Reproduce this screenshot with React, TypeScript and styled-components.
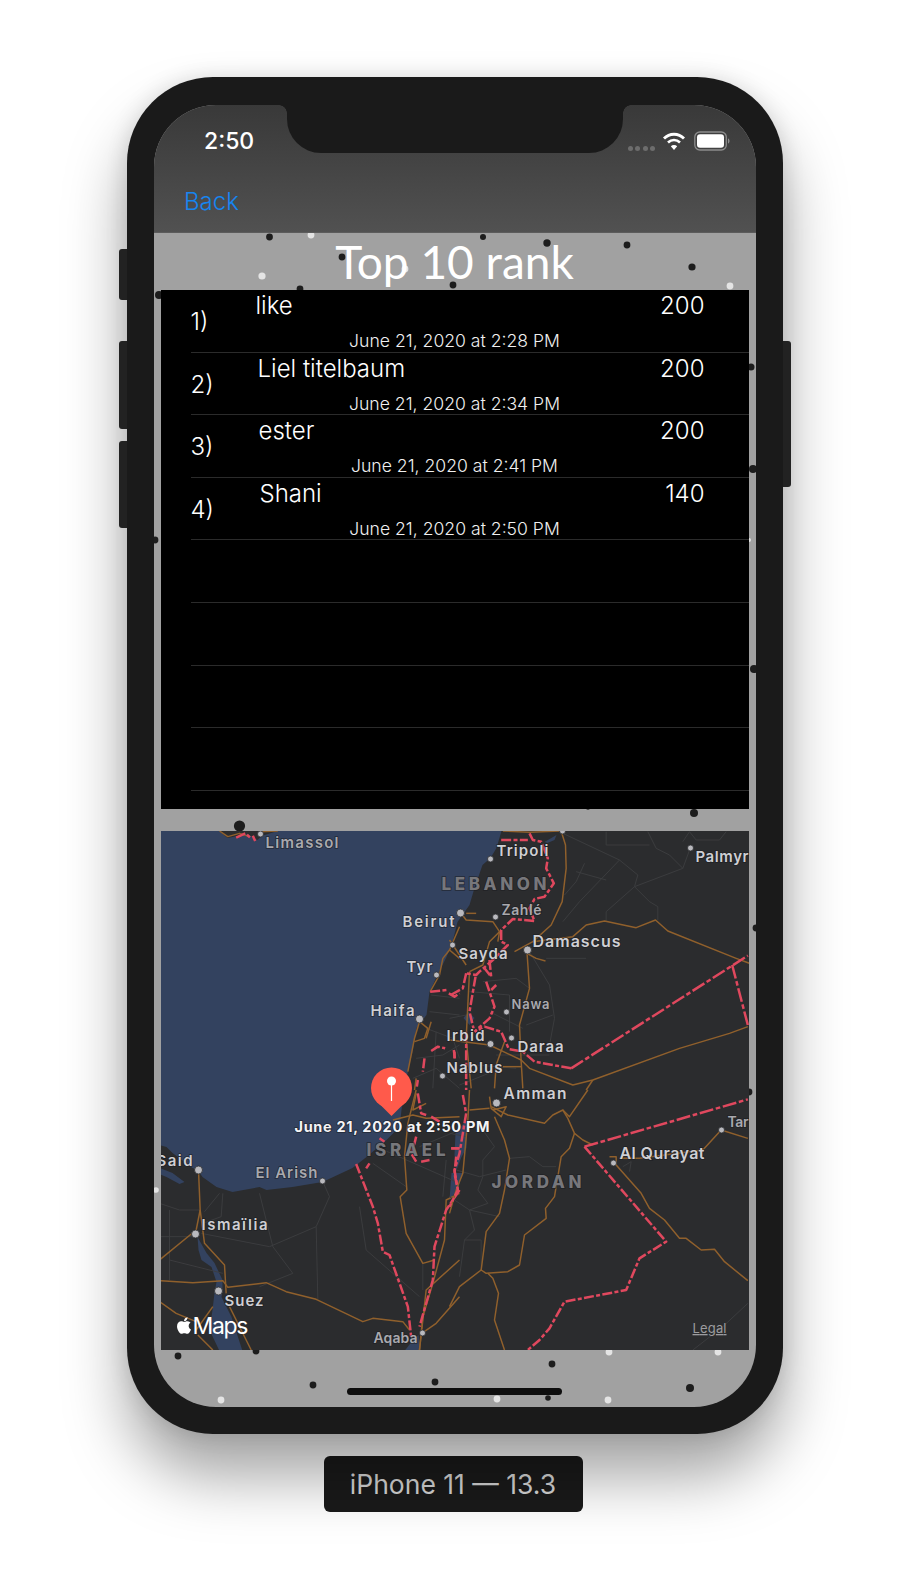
import React from "react";
import styled, { createGlobalStyle } from "styled-components";
import { FaApple } from "react-icons/fa";

const Global = createGlobalStyle`
  html, body { margin: 0; padding: 0; background: #fff; }
  #root { width: 910px; height: 1584px; overflow: hidden; }
`;

const UI = `"Inter", "Liberation Sans", sans-serif`;

const Stage = styled.div`
  width: 910px;
  height: 1584px;
  padding-top: 77px;
  box-sizing: border-box;
  display: flex;
  flex-direction: column;
  align-items: center;
  background: #fff;
  font-family: ${UI};
`;

const Phone = styled.div`
  position: relative;
  width: 656px;
  height: 1357px;
  box-sizing: border-box;
  padding: 28px 26px 27px 27px;
  border-radius: 86px;
  background: #1a1a1a;
  box-shadow: 0 42px 62px rgba(0, 0, 0, 0.36), 0 0 22px rgba(0, 0, 0, 0.12);
`;

const SideButton = styled.div<{ $side: "left" | "right"; $top: number; $height: number }>`
  position: absolute;
  ${(p) => (p.$side === "left" ? "left: -8px; border-radius: 3px 0 0 3px;" : "right: -8px; border-radius: 0 3px 3px 0;")}
  top: ${(p) => p.$top}px;
  width: 8px;
  height: ${(p) => p.$height}px;
  background: #222;
`;

const Screen = styled.div`
  position: relative;
  width: 602px;
  height: 1302px;
  border-radius: 62px;
  overflow: hidden;
  display: flex;
  flex-direction: column;
  background: #a1a1a1;
`;

const Notch = styled.div`
  position: absolute;
  top: 0;
  left: 133px;
  width: 336px;
  height: 48px;
  background: #1a1a1a;
  border-radius: 0 0 34px 34px;
  z-index: 3;
  &::before,
  &::after {
    content: "";
    position: absolute;
    top: 0;
    width: 8px;
    height: 8px;
  }
  &::before {
    left: -8px;
    background: radial-gradient(circle at 0 100%, transparent 7.5px, #1a1a1a 8px);
  }
  &::after {
    right: -8px;
    background: radial-gradient(circle at 100% 100%, transparent 7.5px, #1a1a1a 8px);
  }
`;

const Header = styled.header`
  position: relative;
  height: 128px;
  flex: none;
  box-sizing: border-box;
  background: linear-gradient(#393939, #515151);
  border-bottom: 1px solid #5c5c5c;
  display: flex;
  flex-direction: column;
`;

const StatusBar = styled.div`
  height: 82px;
  padding: 22px 25px 0 50px;
  box-sizing: border-box;
  display: flex;
  justify-content: space-between;
  align-items: flex-start;
`;

const Clock = styled.span`
  font-size: 23px;
  line-height: 29px;
  font-weight: 500;
  color: #fff;
`;

const StatusIcons = styled.div`
  display: flex;
  align-items: center;
  gap: 8px;
  margin-top: 4px;
`;

const Signal = styled.div`
  display: flex;
  gap: 2.5px;
  margin: 14px -1px 0 0;
`;

const SignalDot = styled.i`
  width: 5px;
  height: 5px;
  border-radius: 50%;
  background: #6d6d6d;
`;

const NavBar = styled.nav`
  padding-left: 30px;
`;

const BackLink = styled.a`
  font-size: 24px;
  line-height: 30px;
  font-weight: 300;
  color: #1685f0;
`;

const Backdrop = styled.svg`
  position: absolute;
  left: 0;
  top: 128px;
  width: 603px;
  height: 1174px;
`;

const Star = styled.circle<{ $white?: boolean }>`
  fill: ${(p) => (p.$white ? "#e4e4e4" : "#1d1d1d")};
`;

const Content = styled.main`
  position: relative;
  flex: 1;
  display: flex;
  flex-direction: column;
  padding: 0 7.5px 0 6.5px;
`;

const Title = styled.h1`
  height: 57px;
  margin: 0;
  text-align: center;
  font-family: "Lato", sans-serif;
  font-size: 46px;
  line-height: 58px;
  font-weight: 400;
  color: #fff;
`;

const Table = styled.section`
  height: 519px;
  overflow: hidden;
  background: #000;
  color: #fff;
`;

const Row = styled.div`
  position: relative;
  height: 62.6px;
  box-sizing: border-box;
  display: grid;
  grid-template-columns: 94px 1fr auto;
  grid-template-rows: 30px 32.6px;
  &::after {
    content: "";
    position: absolute;
    left: 30px;
    right: 0;
    bottom: 0;
    height: 1px;
    background: #2b2b2b;
  }
`;

const Rank = styled.span`
  grid-column: 1;
  grid-row: 1 / 3;
  align-self: center;
  padding: 2px 0 0 30px;
  font-size: 24px;
  line-height: 28px;
  font-weight: 300;
`;

const Name = styled.span<{ $indent: number }>`
  grid-column: 2;
  grid-row: 1;
  padding-left: ${(p) => p.$indent}px;
  font-size: 24px;
  line-height: 31px;
  font-weight: 300;
`;

const Score = styled.span`
  grid-column: 3;
  grid-row: 1;
  padding-right: 44px;
  font-size: 24px;
  line-height: 31px;
  font-weight: 300;
`;

const DateLine = styled.span`
  grid-column: 1 / -1;
  grid-row: 2;
  text-align: center;
  align-self: end;
  margin-bottom: -0.5px;
  font-size: 17.6px;
  line-height: 25px;
  font-weight: 300;
  color: #f0f0f0;
`;

const MapPanel = styled.svg`
  display: block;
  margin-top: 21.5px;
  width: 588px;
  height: 519.5px;
`;

const Sea = styled.rect`
  fill: #33425f;
`;
const Land = styled.path`
  fill: #2b2c2e;
`;
const Water = styled.path`
  fill: #33425f;
`;
const Minor = styled.path`
  fill: none;
  stroke: #3c3d40;
  stroke-width: 2.8;
`;
const Road = styled.path`
  fill: none;
  stroke: #90602c;
  stroke-width: 4.4;
  stroke-linejoin: round;
`;
const Border = styled.path<{ $long?: boolean }>`
  fill: none;
  stroke: #e0485e;
  stroke-width: 7.5;
  stroke-linejoin: round;
  stroke-dasharray: ${(p) => (p.$long ? "42 8 14 8" : "30 7 12 7")};
`;
const City = styled.circle`
  fill: #b9b9be;
  stroke: #2b2c2e;
  stroke-width: 0.8;
`;

type LabelKind = "city" | "dim" | "country" | "stamp";
const Label = styled.text<{ $kind: LabelKind; $size: number }>`
  font-family: ${UI};
  font-size: ${(p) => p.$size}px;
  font-weight: ${(p) => (p.$kind === "stamp" ? 700 : p.$kind === "country" ? 800 : 600)};
  fill: ${(p) =>
    p.$kind === "stamp" ? "#f4f4f6" : p.$kind === "country" ? "#77777b" : p.$kind === "dim" ? "#a9a9ae" : "#cfcfd3"};
  stroke: rgba(25, 26, 30, 0.65);
  stroke-width: 1.6px;
  paint-order: stroke;
`;
const MapsWord = styled.text`
  font-family: ${UI};
  font-size: 23px;
  font-weight: 400;
  fill: #fff;
`;
const Legal = styled.text`
  font-family: ${UI};
  font-size: 13px;
  font-weight: 400;
  fill: #9c9c9f;
  text-decoration: underline;
`;
const PinHead = styled.circle`
  fill: #ff5a4b;
`;
const PinTail = styled.path`
  fill: #ff5a4b;
`;
const PinDot = styled.circle`
  fill: #fff;
`;
const PinStick = styled.line`
  stroke: #fff;
  stroke-width: 1.2;
`;

const HomeBar = styled.div`
  position: absolute;
  left: 193px;
  bottom: 12px;
  width: 215px;
  height: 7px;
  border-radius: 4px;
  background: #0e0e0e;
`;

const Caption = styled.div`
  margin: 22px 4px 0 0;
  width: 259px;
  height: 56px;
  box-sizing: border-box;
  border-radius: 6px;
  background: #1a1a1a;
  color: #d8d8d8;
  display: flex;
  align-items: center;
  justify-content: center;
  font-size: 26.5px;
  font-weight: 400;
`;

const scores = [
  { rank: "1)", name: "like", indent: 1, score: 200, date: "June 21, 2020 at 2:28 PM" },
  { rank: "2)", name: "Liel titelbaum", indent: 3, score: 200, date: "June 21, 2020 at 2:34 PM" },
  { rank: "3)", name: "ester", indent: 4, score: 200, date: "June 21, 2020 at 2:41 PM" },
  { rank: "4)", name: "Shani", indent: 5, score: 140, date: "June 21, 2020 at 2:50 PM" },
];

const blackStars: [number, number, number][] = [
  [269.5, 237, 3.4], [483, 237, 3], [547, 243, 3.7], [627, 245, 3.4], [692, 267, 3.6], [342, 257, 3.4],
  [453, 285, 3.4], [300, 289, 3.4], [159, 295, 4], [155, 540, 3.4], [751, 367, 3.5], [753, 469, 4],
  [754, 669, 4], [239.5, 826, 5.6], [694, 813, 4], [588, 807.5, 2.2], [178, 1356, 3.4], [256, 1351, 3.4],
  [552, 1364, 3.4], [313, 1385, 3.4], [435, 1382, 3.4], [548, 1398, 2.8], [690, 1388, 4], [756, 928, 3.4], [749, 1092, 3.4],
];
const whiteStars: [number, number, number][] = [
  [311, 235, 3.4], [262, 276, 3.6], [405, 269, 3.4], [730, 286, 3.4], [749, 540, 2], [609, 1352, 3.4], [718, 1352, 3.4],
  [221, 1400, 3.4], [497, 1399, 3.4], [608, 1400, 3.4], [156, 1190, 2.8],
];

const cities: [number, number, number][] = [
  [261, 834, 3], [491, 859, 3], [691, 848, 3], [461, 913, 4], [496, 917, 3], [528, 950, 4], [453, 945, 3],
  [437, 975, 3], [420, 1019, 4], [507, 1012, 3], [491, 1044, 3.5], [512, 1038, 3], [443, 1076, 3], [497, 1103, 4],
  [323, 1181, 3], [199, 1170, 4], [196, 1234, 4], [219, 1291, 4], [423, 1333, 3], [614, 1163, 3], [722, 1130, 3],
  [563, 831, 3],
];

const labels: { t: string; x: number; y: number; w: number; s: number; k: LabelKind }[] = [
  { t: "Limassol", x: 266, y: 848, w: 73, s: 15, k: "dim" },
  { t: "Tripoli", x: 497, y: 856, w: 52, s: 15, k: "city" },
  { t: "Palmyr", x: 696, y: 862, w: 53, s: 15, k: "city" },
  { t: "LEBANON", x: 442, y: 890, w: 105, s: 17, k: "country" },
  { t: "Beirut", x: 403, y: 927, w: 52, s: 15, k: "city" },
  { t: "Zahlé", x: 502, y: 915, w: 40, s: 14, k: "dim" },
  { t: "Damascus", x: 533, y: 947, w: 88, s: 16, k: "city" },
  { t: "Sayda", x: 459, y: 959, w: 49, s: 15, k: "city" },
  { t: "Tyr", x: 407, y: 972, w: 26, s: 15, k: "city" },
  { t: "Haifa", x: 371, y: 1016, w: 44, s: 15, k: "city" },
  { t: "Nawa", x: 512, y: 1009, w: 38, s: 13, k: "dim" },
  { t: "Irbid", x: 447, y: 1041, w: 38, s: 15, k: "city" },
  { t: "Daraa", x: 518, y: 1052, w: 46, s: 15, k: "city" },
  { t: "Nablus", x: 447, y: 1073, w: 56, s: 15, k: "city" },
  { t: "Amman", x: 504, y: 1099, w: 63, s: 15.5, k: "city" },
  { t: "June 21, 2020 at 2:50 PM", x: 295, y: 1132, w: 195, s: 14.5, k: "stamp" },
  { t: "ISRAEL", x: 367, y: 1156, w: 79, s: 17, k: "country" },
  { t: "Said", x: 157, y: 1166, w: 36, s: 15, k: "city" },
  { t: "El Arish", x: 256, y: 1178, w: 62, s: 15, k: "dim" },
  { t: "Ismaïlia", x: 202, y: 1230, w: 66, s: 15, k: "city" },
  { t: "Suez", x: 225, y: 1306, w: 39, s: 15, k: "city" },
  { t: "Aqaba", x: 374, y: 1343, w: 44, s: 14, k: "dim" },
  { t: "JORDAN", x: 492, y: 1188, w: 90, s: 17, k: "country" },
  { t: "Al Qurayat", x: 620, y: 1159, w: 85, s: 16, k: "city" },
  { t: "Tar", x: 728, y: 1127, w: 21, s: 14, k: "dim" },
];

type Quadrant = { x: number; y: number; minor: string[]; road: string[]; border: string[]; long?: string[] };

// each quadrant's paths are drawn on a 3x grid, then scaled down into the map
const quadrants: Quadrant[] = [
  {
    x: 160,
    y: 825,
    minor: [
      "M815,510 L900,520", "M810,560 L900,570", "M800,610 L880,640 L900,700", "M770,700 L850,690 L900,660",
      "M760,760 L830,730 L900,790", "M830,620 L820,790",
    ],
    road: [
      "M180,18 L205,35 L240,25 L270,35", "M300,20 L355,18", "M900,305 L870,375 L850,400 L840,450 L812,500",
      "M870,375 L900,400", "M780,590 L765,640 L745,740", "M780,590 L805,610 L795,640 L765,650", "M815,590 L800,640",
      "M770,760 L765,795",
    ],
    border: [
      "M812,500 L862,495", "M868,505 L885,515 L900,505", "M815,678 L835,665 L857,670", "M883,675 L886,700",
      "M795,700 L790,740", "M775,765 L772,785", "M230,38 L258,25 L272,38", "M280,32 L287,48",
    ],
  },
  {
    x: 450,
    y: 825,
    minor: [
      "M340,25 L510,105 L565,150 L555,185 L470,260 L470,288", "M555,185 L600,230 L625,245 L625,285",
      "M555,185 L700,130 L722,70", "M510,105 L390,230 L340,290", "M380,140 L470,165", "M405,115 L380,170 L345,210",
      "M595,20 L620,70 L660,90 L700,130", "M700,50 L720,20 L740,45 L810,45 L830,20", "M470,20 L470,60 L600,60",
      "M240,380 L300,480 L315,580 L300,660", "M290,400 L410,400", "M100,470 L200,460 L240,490",
      "M60,500 L180,510 L180,620", "M230,600 L310,570", "M120,560 L220,610", "M0,580 L50,570", "M80,720 L200,730",
      "M30,780 L130,740", "M140,690 L300,690",
    ],
    road: [
      "M160,18 L240,22 L330,18", "M335,18 L348,60 L350,130 L338,230 L305,300 L250,350 L195,380",
      "M35,265 L50,285 L130,290 L150,320 L145,350", "M150,320 L120,350 L100,420 L60,440", "M80,265 L50,265",
      "M250,350 L370,335 L410,300 L465,288 L560,308 L618,285 L655,318 L860,400 L900,415",
      "M232,375 L240,490 L210,600 L215,710 L220,790", "M232,385 L260,400 L288,408", "M60,440 L50,640 L65,790",
      "M0,645 L120,660 L215,705 L240,730 L370,780 L430,765 L690,670 L840,625 L895,605", "M430,765 L410,795",
      "M165,650 L140,720 L135,790", "M0,345 L50,420", "M160,725 L215,725",
    ],
    border: [
      "M365,730 L255,710 L220,680 L178,672 L155,620 L105,605 L75,620",
      "M240,25 L250,45 L275,50 L295,100 L290,130 L313,175 L285,215 L255,222 L240,250 L255,288 L190,282 L155,315 L155,350 L175,360 L130,405 L90,440 L80,450 L50,445",
      "M120,405 L125,455 L105,430", "M110,470 L135,545 L120,580 L75,620", "M140,480 L125,495", "M50,445 L40,490 L0,512",
      "M78,455 L60,560 L72,610", "M50,620 L50,795", "M15,680 L15,700", "M155,45 L235,45",
    ],
    long: ["M365,730 L895,392", "M848,420 L895,600"],
  },
  {
    x: 160,
    y: 1090,
    minor: [
      "M0,340 L60,360 L120,360", "M180,310 L135,365", "M300,310 L340,470 L400,550 L300,590",
      "M125,430 L330,470 L470,410 L510,320 L490,275", "M470,410 L475,628", "M600,350 L620,480 L780,620",
      "M30,360 L30,570", "M0,440 L100,440", "M190,310 L185,380 L130,400", "M640,220 L740,290", "M650,170 L900,280",
      "M860,210 L850,320", "M790,520 L790,600", "M30,510 L190,550", "M780,170 L900,120",
    ],
    road: [
      "M117,240 L122,360 L110,420 L0,510", "M122,360 L135,460 L195,525 L200,610",
      "M0,572 L100,578 L190,572 L205,592 L320,578 L380,605 L470,628 L610,695 L640,685 L730,695 L750,720",
      "M160,650 L110,720", "M115,735 L160,780", "M210,650 L275,780", "M0,635 L50,670 L110,695",
      "M770,0 L745,100 L735,200 L742,300 L722,320 L740,430 L790,520 L825,510",
      "M900,310 L860,330 L855,450 L820,580 L790,680 L780,780", "M780,780 L800,600 L900,510", "M790,728 L830,700 L900,620",
      "M700,90 L760,75 L800,85 L900,80", "M770,10 L760,60 L800,40",
    ],
    border: [
      "M590,222 L640,350 L655,400 L670,485 L690,495 L745,650 L755,740", "M900,300 L860,360 L825,470 L820,570 L780,710",
      "M770,140 L765,160 L755,190 L770,215", "M785,215 L810,210", "M630,220 L620,235", "M660,145 L675,155",
      "M775,10 L785,70 L800,75", "M815,80 L840,95", "M875,175 L900,175", "M890,200 L885,250 L895,300",
    ],
  },
  {
    x: 450,
    y: 1090,
    minor: [
      "M100,120 L135,170 L100,210 L100,260 L85,300 L115,340 L60,360 L75,420 L45,450 L30,560",
      "M45,450 L95,450 L95,540", "M180,205 L240,200 L280,230 L320,230", "M20,240 L90,260 L170,240", "M0,320 L60,360 L150,380",
      "M520,230 L545,215 L540,245", "M895,640 L820,710 L730,780", "M0,130 L50,140",
    ],
    road: [
      "M125,50 L175,75 L285,100 L310,75 L340,60 L355,85 L375,130 L400,150 L430,165", "M340,60 L360,80 L415,0",
      "M375,130 L360,175 L335,200 L315,320 L288,355 L290,385 L225,435 L210,525 L175,545 L110,550 L95,540 L30,590 L0,650",
      "M135,80 L165,150 L180,205 L165,300 L150,370 L110,425 L95,540", "M115,550 L130,565 L147,610 L135,690 L165,780",
      "M480,200 L500,200 L500,225 L575,310 L600,355 L645,390 L690,445 L710,445 L755,480 L795,478 L825,515 L895,572",
      "M510,205 L570,205 L760,180 L815,120 L895,145", "M60,60 L120,55", "M60,0 L55,90 L40,250 L20,300 L0,370",
      "M120,20 L125,55 L155,80 L170,50 L130,60",
    ],
    border: [
      "M405,170 L650,455 L570,505 L530,600 L345,635 L300,715 L270,750 L235,780",
      "M40,15 L50,70 L40,130 L30,190 L15,240 L25,300 L0,350", "M5,175 L30,175",
    ],
    long: ["M405,170 L895,28"],
  },
];

const landPath =
  "M502,831 L497,848 L491,858 L483,865 L475,888 L470,905 L458,922 L453,942 L447,957 L438,975 L430,992 L427,1015 L417,1028 L413,1052 L407,1078 L402,1110 L400,1127 L387,1140 L367,1157 L353,1168 L323,1182 L293,1187 L267,1190 L260,1187 L233,1192 L217,1187 L203,1177 L198,1170 L193,1168 L173,1153 L167,1147 L160,1145 L160,1351 L750,1351 L750,831 Z M220,831 L228,838 L248,834 L258,840 L262,836 L278,831 Z";

const waterPaths = [
  "M198,1237 L207,1253 L215,1263 L223,1280 L223,1290 L222,1297 L232,1317 L243,1351 L220,1351 L210,1330 L213,1310 L215,1293 L217,1282 L212,1267 L202,1260 L199,1250 Z",
  "M405,1351 L420,1351 L419,1335 L412,1342 Z",
  "M469,1012 L475,1018 L470,1025 L464,1018 Z",
  "M456,1133 L467,1120 L467,1148 L462,1157 L457,1170 L455,1155 Z",
  "M452,1173 L463,1173 L458,1190 L450,1200 Z",
  "M545,842 L557,835 L555,840 L548,843 Z",
  "M160,1168 L173,1173 L185,1182 L180,1184 L167,1177 L160,1174 Z",
];

const WifiIcon = () => (
  <svg width="24" height="20" viewBox="0 0 24 20">
    <path d="M2 7.5 C7.5 1.8 16.5 1.8 22 7.5" fill="none" stroke="#fff" strokeWidth="2.8" />
    <path d="M6 11.5 C9.5 8.2 14.5 8.2 18 11.5" fill="none" stroke="#fff" strokeWidth="2.6" />
    <path d="M12 19 L8.8 15.2 C10.7 13.7 13.3 13.7 15.2 15.2 Z" fill="#fff" />
  </svg>
);

const BatteryIcon = () => (
  <svg width="37" height="20" viewBox="0 0 37 20">
    <rect x="0.8" y="1" width="31.5" height="18" rx="5" fill="none" stroke="#8c8c8c" strokeWidth="1.3" />
    <rect x="3" y="3.2" width="27" height="13.6" rx="3" fill="#fff" />
    <path d="M34 7.5 C36 8 36 12 34 12.5 Z" fill="#8c8c8c" />
  </svg>
);

const GeoMap = () => (
  <MapPanel viewBox="161.5 831 588 519.5">
    <Sea x="161" y="831" width="589" height="520" />
    <Land d={landPath} />
    {waterPaths.map((d) => (
      <Water key={d} d={d} />
    ))}
    {quadrants.map((q) => (
      <g key={`${q.x}-${q.y}`} transform={`translate(${q.x} ${q.y}) scale(${1 / 3})`}>
        {q.minor.map((d) => (
          <Minor key={d} d={d} />
        ))}
        {q.road.map((d) => (
          <Road key={d} d={d} />
        ))}
        {q.border.map((d) => (
          <Border key={d} d={d} />
        ))}
        {(q.long ?? []).map((d) => (
          <Border key={d} d={d} $long />
        ))}
      </g>
    ))}
    {cities.map(([cx, cy, r]) => (
      <City key={`${cx}-${cy}`} cx={cx} cy={cy} r={r} />
    ))}
    {labels.map((l) => (
      <Label key={l.t} x={l.x} y={l.y} $size={l.s} $kind={l.k} textLength={l.w} lengthAdjust="spacing">
        {l.t}
      </Label>
    ))}
    <PinTail d="M380,1104 L392,1116 L404,1104 Z" />
    <PinHead cx="392" cy="1088" r="20.5" />
    <PinStick x1="392" y1="1082" x2="392" y2="1101" />
    <PinDot cx="392" cy="1081" r="4.5" />
    <FaApple x={175} y={1316} size={19} color="#fff" />
    <MapsWord x="193" y="1334" textLength={56}>
      Maps
    </MapsWord>
    <Legal x="693" y="1333" textLength={34}>
      Legal
    </Legal>
  </MapPanel>
);

export default function App() {
  return (
    <Stage>
      <Global />
      <Phone>
        <SideButton $side="left" $top={172} $height={51} />
        <SideButton $side="left" $top={264} $height={88} />
        <SideButton $side="left" $top={364} $height={87} />
        <SideButton $side="right" $top={264} $height={146} />
        <Screen>
          <Notch />
          <Header>
            <StatusBar>
              <Clock>2:50</Clock>
              <StatusIcons>
                <Signal>
                  <SignalDot />
                  <SignalDot />
                  <SignalDot />
                  <SignalDot />
                </Signal>
                <WifiIcon />
                <BatteryIcon />
              </StatusIcons>
            </StatusBar>
            <NavBar>
              <BackLink>Back</BackLink>
            </NavBar>
          </Header>
          <Backdrop viewBox="154 233 603 1174">
            {blackStars.map(([cx, cy, r]) => (
              <Star key={`${cx}-${cy}`} cx={cx} cy={cy} r={r} />
            ))}
            {whiteStars.map(([cx, cy, r]) => (
              <Star key={`${cx}-${cy}`} cx={cx} cy={cy} r={r} $white />
            ))}
          </Backdrop>
          <Content>
            <Title>Top 10 rank</Title>
            <Table>
              {scores.map((s) => (
                <Row key={s.rank}>
                  <Rank>{s.rank}</Rank>
                  <Name $indent={s.indent}>{s.name}</Name>
                  <Score>{s.score}</Score>
                  <DateLine>{s.date}</DateLine>
                </Row>
              ))}
              {[0, 1, 2, 3].map((i) => (
                <Row key={i} />
              ))}
            </Table>
            <GeoMap />
          </Content>
          <HomeBar />
        </Screen>
      </Phone>
      <Caption>iPhone 11 — 13.3</Caption>
    </Stage>
  );
}
